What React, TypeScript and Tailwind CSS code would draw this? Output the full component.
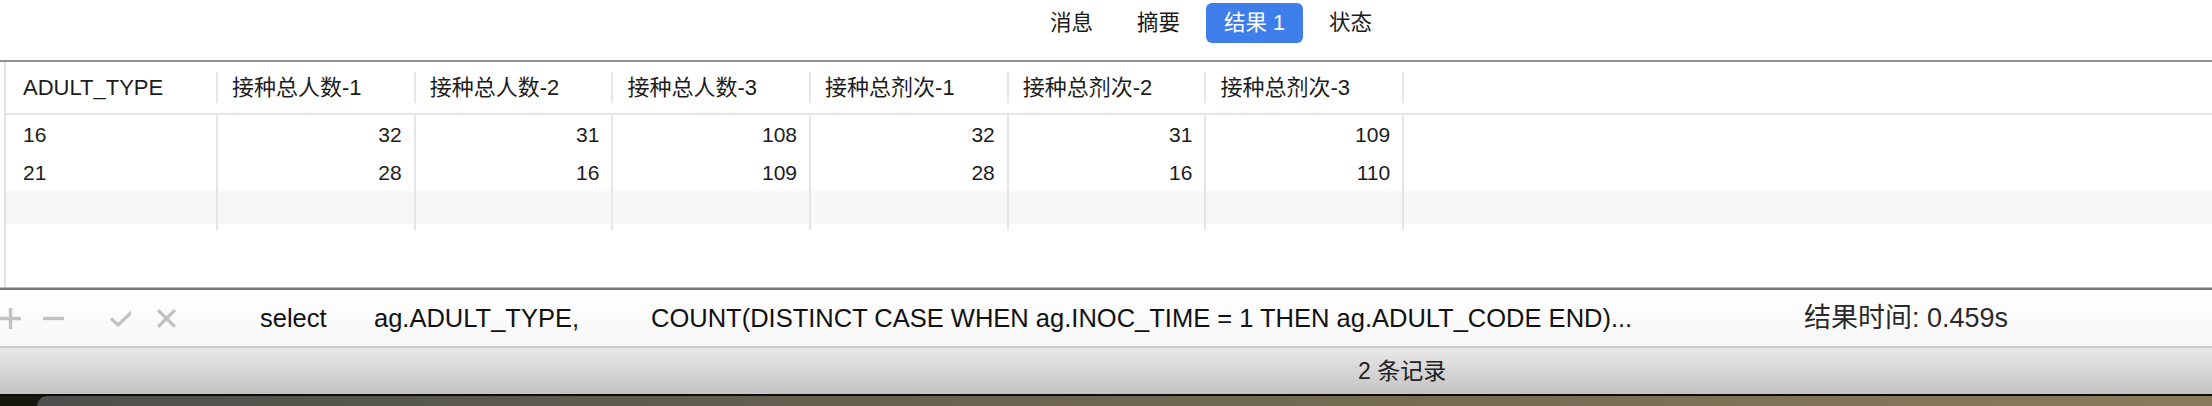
import type { ReactNode } from 'react';

const FONT = { fontFamily: '"Liberation Sans", "Noto Sans CJK SC", sans-serif' };

const tabs = ['消息', '摘要', '结果 1', '状态'];
const activeTab = '结果 1';

const columns = ['ADULT_TYPE', '接种总人数-1', '接种总人数-2', '接种总人数-3', '接种总剂次-1', '接种总剂次-2', '接种总剂次-3'];

const rows = [
  ['16', '32', '31', '108', '32', '31', '109'],
  ['21', '28', '16', '109', '28', '16', '110'],
];

const grid = 'grid grid-cols-[212px_repeat(6,197.7px)_1fr]';

function HeaderCell({ children, first }: { children?: ReactNode; first?: boolean }) {
  return (
    <div className="flex h-full items-center justify-between">
      <span className={first ? 'pl-[17px]' : 'pl-[14px]'}>{children}</span>
      <div className="h-[31px] w-[2px] bg-[#e6e6e6]" />
    </div>
  );
}

function Icon({ kind }: { kind: 'plus' | 'minus' | 'check' | 'x' }) {
  const common = { stroke: '#c2c2c2', strokeWidth: 3.2, fill: 'none', strokeLinecap: 'butt' as const };
  return (
    <svg width="21" height="21" viewBox="0 0 20 20">
      {kind === 'plus' && <path d="M0 10H20M10 0V20" {...common} />}
      {kind === 'minus' && <path d="M0 10H20" {...common} />}
      {kind === 'check' && <path d="M1 10.5L8 17L24 2" {...common} transform="scale(0.95)" />}
      {kind === 'x' && <path d="M2 2L18 18M18 2L2 18" {...common} />}
    </svg>
  );
}

export default function App() {
  return (
    <div className="flex h-[406px] w-[2212px] flex-col overflow-hidden bg-white text-[#1c1c1c]" style={FONT}>
      {/* tab bar */}
      <div className="flex h-[60px] shrink-0 items-start gap-2 pl-[1032px] pt-[3px]">
        {tabs.map((t) => (
          <div
            key={t}
            className={`flex h-[40px] items-center rounded-[6px] px-[18px] text-[21.5px] ${t === activeTab ? 'bg-[#3d7eea] text-white' : 'text-[#1a1a1a]'}`}
          >
            {t}
          </div>
        ))}
      </div>
      <div className="h-[2px] shrink-0 bg-[#8e8e8e]" />

      {/* results grid */}
      <div className="flex h-[225px] shrink-0">
        <div className="w-[4px]" />
        <div className="w-[2px] bg-[#e2e2e2]" />
        <div className="flex flex-1 flex-col text-[21px]">
          <div className={`${grid} h-[53px] border-b-2 border-[#e4e4e4] text-[22px]`}>
            {columns.map((c, i) => (
              <HeaderCell key={c} first={i === 0}>
                {c}
              </HeaderCell>
            ))}
            <div />
          </div>
          {rows.map((r, ri) => (
            <div key={ri} className={`${grid} h-[38px]`}>
              {r.map((v, i) => (
                <div
                  key={i}
                  className={`flex items-center border-r-2 border-[#e6e6e6] pt-[2px] ${i === 0 ? 'pl-[17px]' : 'justify-end pr-[12px]'}`}
                >
                  {v}
                </div>
              ))}
              <div />
            </div>
          ))}
          <div className={`${grid} h-[39px]`}>
            {columns.map((c) => (
              <div key={c} className="border-r-2 border-[#e6e6e6]">
                <div className="h-[33px] bg-[#f7f7f7]" />
              </div>
            ))}
            <div>
              <div className="h-[33px] bg-[#f7f7f7]" />
            </div>
          </div>
        </div>
      </div>
      <div className="h-[1px] shrink-0 bg-[#b8b8b8]" />
      <div className="h-[2px] shrink-0 bg-[#7a7a7a]" />

      {/* sql toolbar */}
      <div className="flex h-[56px] shrink-0 items-center bg-gradient-to-b from-white to-[#f7f7f7] text-[25.5px] text-[#111]">
        <div className="flex items-center">
          <Icon kind="plus" />
          <div className="ml-[22px]">
            <Icon kind="minus" />
          </div>
          <div className="ml-[46px]">
            <Icon kind="check" />
          </div>
          <div className="ml-[25px]">
            <Icon kind="x" />
          </div>
        </div>
        <span className="ml-[83px] w-[114px]">select</span>
        <span className="w-[277px]">ag.ADULT_TYPE,</span>
        <span className="w-[1153px] whitespace-nowrap">COUNT(DISTINCT CASE WHEN ag.INOC_TIME = 1 THEN ag.ADULT_CODE END)...</span>
        <span className="text-[27px] text-[#2a2a2a]">结果时间: 0.459s</span>
      </div>
      <div className="h-[2px] shrink-0 bg-[#cdcdcd]" />

      {/* status bar */}
      <div className="flex h-[46px] shrink-0 items-center bg-gradient-to-b from-[#e9e9e9] to-[#c3c3c3] pl-[1358px] text-[23px] text-[#222]">
        2 条记录
      </div>
      <div className="h-[2px] shrink-0 bg-[#0c0c0c]" />

      {/* desktop behind the window */}
      <div className="flex flex-1 bg-[#17160f]">
        <div className="w-[37px]" />
        <div className="flex-1 rounded-tl-[16px] bg-gradient-to-r from-[#4d4f4c] via-[#6e6650] to-[#8a7b5c]" />
      </div>
    </div>
  );
}
